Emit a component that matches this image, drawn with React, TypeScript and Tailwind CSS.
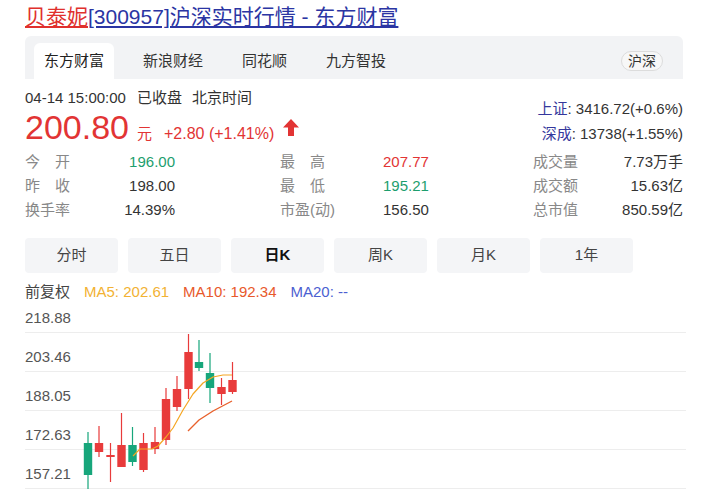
import React from "react";

const FONT = "font-['Liberation_Sans','Noto_Sans_CJK_SC',sans-serif]";

const SITES = ["东方财富", "新浪财经", "同花顺", "九方智投"];
const PERIODS = ["分时", "五日", "日K", "周K", "月K", "1年"];
const AXIS = ["218.88", "203.46", "188.05", "172.63", "157.21"];

// page coordinates: x centre, body top/bottom, wick top/bottom
const CANDLES = [
  { x: 88, bt: 443, bb: 475, wt: 432, wb: 489, up: false },
  { x: 99, bt: 443, bb: 452, wt: 426, wb: 457, up: true },
  { x: 110.5, bt: 455, bb: 457, wt: 443, wb: 482, up: true },
  { x: 121.5, bt: 445, bb: 467, wt: 413, wb: 467, up: true },
  { x: 132.5, bt: 445, bb: 462, wt: 427, wb: 466, up: false },
  { x: 143.5, bt: 443, bb: 470, wt: 433, wb: 472, up: true },
  { x: 155, bt: 442, bb: 449, wt: 427, wb: 454, up: true },
  { x: 166, bt: 399, bb: 440, wt: 388, wb: 445, up: true },
  { x: 177, bt: 389, bb: 407, wt: 376, wb: 411, up: true },
  { x: 188.5, bt: 352, bb: 389, wt: 334, wb: 399, up: true },
  { x: 199, bt: 362, bb: 368, wt: 340, wb: 371, up: false },
  { x: 210, bt: 373, bb: 388, wt: 353, wb: 403, up: false },
  { x: 221.5, bt: 387, bb: 394, wt: 378, wb: 405, up: true },
  { x: 232.5, bt: 380, bb: 392, wt: 362, wb: 394, up: true },
];

const MA5 =
  "M133 456 L140 449 L152 449 L158 446 L166 437 L173 428 L183 410 L193 394 L203 383 L213 377 L223 375 L232 375";
const MA10 = "M188 431 L199 420 L213 411 L232 401";

function Spread({ text }: { text: string }) {
  return (
    <span className="flex w-[45px] justify-between text-[#888]">
      {text.split("").map((c, i) => (
        <span key={i}>{c}</span>
      ))}
    </span>
  );
}

function StatRow({
  l1,
  v1,
  c1,
  l2,
  v2,
  c2,
  l3,
  v3,
}: {
  l1: React.ReactNode;
  v1: string;
  c1: string;
  l2: React.ReactNode;
  v2: string;
  c2: string;
  l3: string;
  v3: string;
}) {
  return (
    <div className="flex h-[24px] items-center text-[15px] whitespace-nowrap">
      <div className="flex w-[150px] justify-between">
        {l1}
        <span className={c1}>{v1}</span>
      </div>
      <div className="ml-[105px] w-[45px]">{l2}</div>
      <span className={`ml-[58px] w-[150px] ${c2}`}>{v2}</span>
      <span className="w-[45px] text-[#888]">{l3}</span>
      <span className="flex-1 text-right text-[#333]">{v3}</span>
    </div>
  );
}

export default function App() {
  return (
    <div className={`${FONT} h-[491px] w-[720px] overflow-hidden bg-white pl-[25px]`}>
      <div className="w-[658px]">
        <div className="pt-[4px] text-[21px] leading-[26px] whitespace-nowrap">
          <span className="text-[#e0302d] underline underline-offset-2">贝泰妮</span>
          <span className="text-[#2b35a3] underline underline-offset-2">
            [300957]沪深实时行情 - 东方财富
          </span>
        </div>

        <div className="mt-[6px] flex h-[43px] items-end rounded-t-md bg-[#f2f3f5] pl-[9px] pr-[20px]">
          {SITES.map((s, i) => (
            <div
              key={s}
              className={`flex h-[36px] items-center rounded-t-md px-[10px] text-[15px] ${
                i === 0 ? "bg-white text-[#222]" : "text-[#333]"
              } ${i > 0 ? "ml-[19px]" : ""}`}
            >
              {s}
            </div>
          ))}
          <div className="ml-auto mb-[8px] flex h-[20px] items-center rounded-full border border-[#dcdcdc] bg-[#f7f7f7] px-[6px] text-[14px] text-[#333]">
            沪深
          </div>
        </div>

        <div className="mt-[9px] flex justify-between">
          <div>
            <div className="flex h-[20px] items-center text-[15px] text-[#333] whitespace-nowrap">
              <span>04-14 15:00:00</span>
              <span className="ml-[11px]">已收盘</span>
              <span className="ml-[10px]">北京时间</span>
            </div>
            <div className="flex h-[38px] items-baseline text-[#e23434] whitespace-nowrap">
              <span className="text-[34px] leading-[38px]">200.80</span>
              <span className="ml-[8px] text-[15px]">元</span>
              <span className="ml-[12px] text-[16px]">+2.80 (+1.41%)</span>
              <svg
                className="ml-[9px] self-center"
                width="16"
                height="17"
                viewBox="0 0 16 17"
              >
                <path d="M8 0 L16 8.5 H11 V17 H5 V8.5 H0 Z" fill="#e23434" />
              </svg>
            </div>
          </div>
          <div className="mt-[8px] text-right text-[15px] leading-[25px] text-[#333] whitespace-nowrap">
            <div>
              <span className="text-[#34379c]">上证</span>: 3416.72(+0.6%)
            </div>
            <div>
              <span className="text-[#34379c]">深成</span>: 13738(+1.55%)
            </div>
          </div>
        </div>

        <div className="mt-[4px]">
          <StatRow
            l1={<Spread text="今开" />}
            v1="196.00"
            c1="text-[#1d9e6e]"
            l2={<Spread text="最高" />}
            v2="207.77"
            c2="text-[#e23434]"
            l3="成交量"
            v3="7.73万手"
          />
          <StatRow
            l1={<Spread text="昨收" />}
            v1="198.00"
            c1="text-[#333]"
            l2={<Spread text="最低" />}
            v2="195.21"
            c2="text-[#1d9e6e]"
            l3="成交额"
            v3="15.63亿"
          />
          <StatRow
            l1={<span className="text-[#888]">换手率</span>}
            v1="14.39%"
            c1="text-[#333]"
            l2={<span className="text-[#888]">市盈(动)</span>}
            v2="156.50"
            c2="text-[#333]"
            l3="总市值"
            v3="850.59亿"
          />
        </div>

        <div className="mt-[16px] flex gap-[10px]">
          {PERIODS.map((p) => (
            <div
              key={p}
              className={`flex h-[35px] w-[93px] items-center justify-center rounded-sm bg-[#f4f5f7] text-[15px] ${
                p === "日K" ? "font-bold text-[#111]" : "text-[#444]"
              }`}
            >
              {p}
            </div>
          ))}
        </div>

        <div className="mt-[9px] flex h-[20px] items-center gap-[14px] text-[15px] whitespace-nowrap">
          <span className="text-[#444]">前复权</span>
          <span className="text-[#f2b233]">MA5: 202.61</span>
          <span className="text-[#e8592b]">MA10: 192.34</span>
          <span className="text-[#4c5fd1]">MA20: --</span>
        </div>

        <div className="relative mt-[1px] w-[661px]">
          {AXIS.map((v, i) => (
            <div
              key={v}
              className={`flex items-end border-b border-[#ededed] pb-[5px] text-[15px] leading-[18px] text-[#555] ${
                i === 0 ? "h-[30px]" : "h-[39px]"
              }`}
            >
              {v}
            </div>
          ))}
          <svg className="absolute inset-0 h-full w-full" viewBox="0 0 661 186" preserveAspectRatio="none">
            <g transform="translate(-25,-303)">
              {CANDLES.map((c, i) => {
                const col = c.up ? "#e83b3b" : "#17a67b";
                return (
                  <g key={i}>
                    <rect x={c.x - 0.6} y={c.wt} width={1.2} height={c.wb - c.wt} fill={col} />
                    <rect x={c.x - 4.2} y={c.bt} width={8.4} height={Math.max(c.bb - c.bt, 2)} fill={col} />
                  </g>
                );
              })}
              <path d={MA5} fill="none" stroke="#f5a623" strokeWidth="1.2" strokeLinejoin="round" />
              <path d={MA10} fill="none" stroke="#e8612c" strokeWidth="1.4" strokeLinejoin="round" />
            </g>
          </svg>
        </div>
      </div>
    </div>
  );
}
